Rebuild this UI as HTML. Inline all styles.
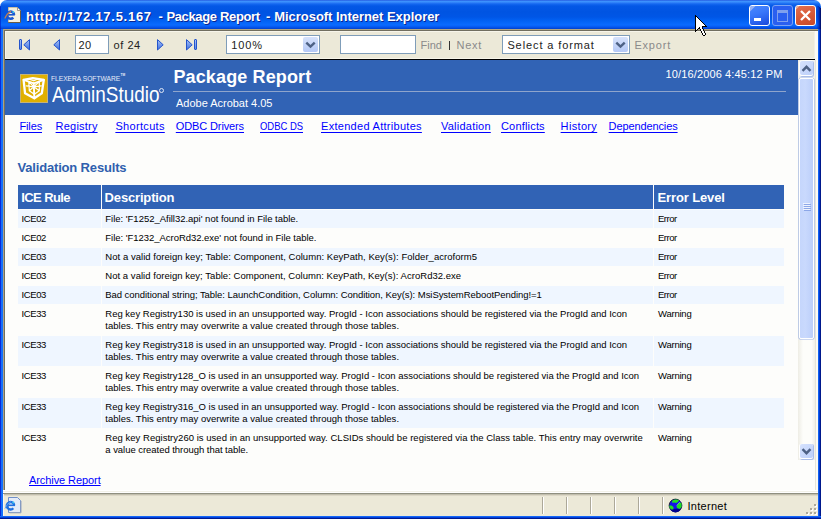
<!DOCTYPE html>
<html><head><meta charset="utf-8"><style>
html,body{margin:0;padding:0;}
body{width:821px;height:519px;position:relative;overflow:hidden;background:#fff;font-family:"Liberation Sans", sans-serif;}
.t{position:absolute;white-space:nowrap;line-height:1;}
.b{position:absolute;}
.lnk{text-decoration:underline;text-underline-offset:2px;text-decoration-thickness:1px;text-decoration-skip-ink:none;}
#title{position:absolute;left:0;top:0;width:821px;height:29px;border-radius:7px 7px 0 0;
 background:linear-gradient(to bottom,#1d46d6 0px,#3f97ff 1px,#3a8cfb 2px,#1467f0 4px,#0458e6 6px,#0054e2 12px,#0056e6 17px,#0262f4 21px,#0a6bff 25px,#0558f0 27px,#0040cc 29px);}
#lframe{position:absolute;left:0;top:29px;width:3px;height:490px;background:linear-gradient(to right,#0a2ad8 0,#0a2ad8 1px,#1470fa 1px,#1470fa 3px);}
#rframe{position:absolute;left:818px;top:29px;width:3px;height:490px;background:linear-gradient(to right,#1060f0 0,#1060f0 1px,#0038d0 1px,#0038d0 2px,#00188c 2px);}
#bframe{position:absolute;left:0;top:516px;width:821px;height:3px;background:linear-gradient(to bottom,#1466f8 0,#1466f8 1px,#0040d8 1px,#0040d8 2px,#001a90 2px);}
.tbtn{position:absolute;top:5px;width:19px;height:19px;border:1px solid #fff;border-radius:3px;overflow:hidden;background:linear-gradient(160deg,#4a88ff 0%,#3a78fa 40%,#2a62ee 70%,#1a48d8 100%);}
.tbtn.dis{border-color:#7ba2f5;background:#2a5ff0;}
.tbtn.close{background:linear-gradient(160deg,#e27050 0%,#d85a38 50%,#c84a28 100%);}
#toolbar{position:absolute;left:3px;top:29px;width:815px;height:31px;background:#ece9d8;box-sizing:border-box;border-top:1px solid #b0a684;border-left:1px solid #a9a286;}
#toolbar:after{content:"";position:absolute;left:0;top:0;right:0;height:1px;background:#716e60;}
#content{position:absolute;left:3px;top:59px;width:815px;height:433px;background:#fff;box-sizing:border-box;border-top:1px solid #000;border-left:1px solid #a09878;}
#hdr{position:absolute;left:5px;top:60px;width:793px;height:55px;background:#3163b5;}
#status{position:absolute;left:3px;top:492px;width:815px;height:24px;background:#ece9d8;box-sizing:border-box;border-top:1px solid #c5c1ac;}
</style></head><body>
<div id="title"></div>
<div id="lframe"></div><div id="rframe"></div><div id="bframe"></div>
<div class="b" style="left:0px;top:6px;width:1px;height:23px;background:rgba(0,20,190,0.55);"></div>
<div class="b" style="left:817px;top:6px;width:1px;height:23px;background:rgba(0,40,190,0.35);"></div>
<div class="b" style="left:818px;top:6px;width:1px;height:23px;background:rgba(0,30,170,0.55);"></div>
<div class="b" style="left:819px;top:7px;width:1px;height:22px;background:rgba(0,20,140,0.75);"></div>
<div class="b" style="left:820px;top:8px;width:1px;height:21px;background:rgba(0,10,100,0.9);"></div>
<svg class="b" style="left:4px;top:6px" width="18" height="18" viewBox="0 0 18 18">
<path d="M4.5 1.5 H13.5 L16.5 4.5 V16.5 H4.5 Z" fill="#f4f0e0" stroke="#6a5c44" stroke-width="1"/>
<path d="M4.5 1.5 H13.5 M4.5 1.5 V16" stroke="#c8c0a8" stroke-width="1"/>
<path d="M13.5 1.5 V4.5 H16.5" fill="#fff" stroke="#8a8070" stroke-width="0.8"/>
<path d="M10.2 8.8 A3.6 3.6 0 1 0 9.3 11.6" stroke="#1a56d0" stroke-width="2.4" fill="none"/>
<path d="M3 8.8 H10.8" stroke="#1a56d0" stroke-width="1.6"/>
<path d="M0.8 12.5 Q2.5 8 7 5.3" stroke="#c88048" stroke-width="1.1" fill="none"/>
<circle cx="9.3" cy="6" r="1" fill="#40d0f0"/>
</svg>
<div class="t" style="left:26.00px;top:10.00px;font-size:13px;color:#fff;font-weight:bold;letter-spacing:0.726px;text-shadow:1px 1px 0 #0a2590;">http://172.17.5.167</div>
<div class="t" style="left:158.50px;top:10.00px;font-size:13px;color:#fff;font-weight:bold;letter-spacing:-0.829px;text-shadow:1px 1px 0 #0a2590;">-</div>
<div class="t" style="left:166.40px;top:10.00px;font-size:13px;color:#fff;font-weight:bold;letter-spacing:-0.347px;text-shadow:1px 1px 0 #0a2590;">Package Report</div>
<div class="t" style="left:266.00px;top:10.00px;font-size:13px;color:#fff;font-weight:bold;letter-spacing:-0.629px;text-shadow:1px 1px 0 #0a2590;">-</div>
<div class="t" style="left:274.20px;top:10.00px;font-size:13px;color:#fff;font-weight:bold;letter-spacing:-0.035px;text-shadow:1px 1px 0 #0a2590;">Microsoft Internet Explorer</div>
<div class="tbtn" style="left:749px"><svg class="b" style="left:0;top:0" width="8" height="8"><path d="M0 0 H5.5 L0 5.5 Z" fill="#a4b8f0" opacity="0.85"/></svg><div class="b" style="left:4px;top:12px;width:7px;height:3px;background:#fff"></div></div>
<div class="tbtn dis" style="left:772px"><div class="b" style="left:4px;top:4px;width:9px;height:8px;border:1px solid #7fa0ee;border-top-width:3px"></div></div>
<div class="tbtn close" style="left:795px"><svg class="b" style="left:0;top:0" width="8" height="8"><path d="M0 0 H3.5 L0 3.5 Z" fill="#e8b8a8" opacity="0.9"/></svg><svg class="b" style="left:0;top:0" width="19" height="19"><path d="M5 5 L14 14 M14 5 L5 14" stroke="#fff" stroke-width="2.3"/></svg></div>
<div class="b" style="left:3px;top:29px;width:815px;height:31px;background:#ece9d8;"></div>
<div class="b" style="left:3px;top:29px;width:815px;height:1px;background:#b0a684;"></div>
<div class="b" style="left:3px;top:29px;width:1px;height:461px;background:#a9a286;"></div>
<div class="b" style="left:4px;top:30px;width:814px;height:1px;background:#716e60;"></div>
<div class="b" style="left:4px;top:30px;width:1px;height:460px;background:#716e60;"></div>
<div class="b" style="left:5px;top:31px;width:810px;height:1px;background:#f7f5ea;"></div>
<div class="b" style="left:5px;top:31px;width:1px;height:27px;background:#f7f5ea;"></div>
<div class="b" style="left:5px;top:58px;width:810px;height:1px;background:#f7f5ea;"></div>
<div class="b" style="left:5px;top:59px;width:810px;height:1px;background:#000;"></div>
<div class="b" style="left:815px;top:31px;width:3px;height:460px;background:#fbfaf4;"></div>
<div class="b" style="left:814px;top:31px;width:1px;height:28px;background:#f2f0e4;"></div>
<div class="b" style="left:19px;top:39px;width:1px;height:9px;background:linear-gradient(#a8c2f6,#5a88e8);border:1px solid #2454cc;border-radius:1px;"></div>
<svg class="b" style="left:23px;top:39px" width="8" height="12" viewBox="0 0 8 12"><defs><linearGradient id="gl23" x1="0" y1="0" x2="0" y2="1"><stop offset="0" stop-color="#a8c2f6"/><stop offset="1" stop-color="#3f70e0"/></linearGradient></defs><path d="M6.5 0.6 V11 L0.8 5.8 Z" fill="url(#gl23)" stroke="#2454cc" stroke-width="1" stroke-linejoin="round"/></svg>
<svg class="b" style="left:53px;top:39px" width="8" height="12" viewBox="0 0 8 12"><defs><linearGradient id="gl53" x1="0" y1="0" x2="0" y2="1"><stop offset="0" stop-color="#a8c2f6"/><stop offset="1" stop-color="#3f70e0"/></linearGradient></defs><path d="M6.5 0.6 V11 L0.8 5.8 Z" fill="url(#gl53)" stroke="#2454cc" stroke-width="1" stroke-linejoin="round"/></svg>
<svg class="b" style="left:157px;top:39px" width="8" height="12" viewBox="0 0 8 12"><defs><linearGradient id="gr157" x1="0" y1="0" x2="0" y2="1"><stop offset="0" stop-color="#a8c2f6"/><stop offset="1" stop-color="#3f70e0"/></linearGradient></defs><path d="M0.5 0.6 V11 L6.2 5.8 Z" fill="url(#gr157)" stroke="#2454cc" stroke-width="1" stroke-linejoin="round"/></svg>
<svg class="b" style="left:186px;top:39px" width="8" height="12" viewBox="0 0 8 12"><defs><linearGradient id="gr186" x1="0" y1="0" x2="0" y2="1"><stop offset="0" stop-color="#a8c2f6"/><stop offset="1" stop-color="#3f70e0"/></linearGradient></defs><path d="M0.5 0.6 V11 L6.2 5.8 Z" fill="url(#gr186)" stroke="#2454cc" stroke-width="1" stroke-linejoin="round"/></svg>
<div class="b" style="left:194px;top:39px;width:1px;height:9px;background:linear-gradient(#a8c2f6,#5a88e8);border:1px solid #2454cc;border-radius:1px;"></div>
<div class="b" style="left:75px;top:35px;width:32px;height:17px;background:#fff;border:1px solid #7f9db9;"></div>
<div class="t" style="left:78.50px;top:39.69px;font-size:11px;color:#222;letter-spacing:0.282px;">20</div>
<div class="t" style="left:113.50px;top:39.69px;font-size:11px;color:#222;letter-spacing:0.567px;">of 24</div>
<div class="b" style="left:226px;top:35px;width:92px;height:17px;background:#fff;border:1px solid #7f9db9;"></div>
<div class="t" style="left:231.30px;top:39.69px;font-size:11px;color:#222;letter-spacing:0.892px;">100%</div>
<div class="b" style="left:303px;top:37px;width:15px;height:15px;background:linear-gradient(to bottom,#d6e2fb,#b4c8f6);border:0;border-radius:2px;"></div><svg class="b" style="left:303px;top:37px" width="15" height="15"><path d="M3.3 5.6 L7.5 9.6 L11.7 5.6" stroke="#4d6185" stroke-width="2.4" fill="none"/></svg>
<div class="b" style="left:340px;top:35px;width:74px;height:17px;background:#fff;border:1px solid #7f9db9;"></div>
<div class="t" style="left:420.40px;top:39.69px;font-size:11px;color:#8a8a8a;letter-spacing:0.050px;">Find</div>
<div class="b" style="left:449px;top:41px;width:1px;height:9px;background:#333;"></div>
<div class="t" style="left:456.60px;top:39.69px;font-size:11px;color:#8a8a8a;letter-spacing:0.696px;">Next</div>
<div class="b" style="left:502px;top:35px;width:126px;height:17px;background:#fff;border:1px solid #7f9db9;"></div>
<div class="t" style="left:507.40px;top:39.69px;font-size:11px;color:#222;letter-spacing:0.895px;">Select a format</div>
<div class="b" style="left:613px;top:37px;width:15px;height:15px;background:linear-gradient(to bottom,#d6e2fb,#b4c8f6);border:0;border-radius:2px;"></div><svg class="b" style="left:613px;top:37px" width="15" height="15"><path d="M3.3 5.6 L7.5 9.6 L11.7 5.6" stroke="#4d6185" stroke-width="2.4" fill="none"/></svg>
<div class="t" style="left:634.40px;top:39.69px;font-size:11px;color:#8a8a8a;letter-spacing:0.801px;">Export</div>
<div class="b" style="left:5px;top:60px;width:810px;height:430px;background:#fdfdfb;"></div>
<div class="b" style="left:815px;top:60px;width:1px;height:431px;background:#e6e4d8;"></div>
<div id="hdr"></div>
<svg class="b" style="left:20px;top:74px" width="28" height="29" viewBox="0 0 28 29">
<rect x="0" y="0" width="28" height="29" fill="#c4b27c"/>
<rect x="1" y="1" width="26" height="27" fill="#e0b000"/>
<g transform="translate(0.3,0.8)" stroke="#fff" fill="none" stroke-linejoin="round" stroke-linecap="round">
<path d="M3.3 5 L12.5 3.3 L23.5 5 L21.5 18.5 L14 23.5 L4.75 18.5 Z" stroke-width="2.3"/>
<path d="M3.3 5 L13.5 8.5 L23.5 5 M13.5 8.5 L14 23.5" stroke-width="1.9"/>
<path d="M8.5 6.8 L13.5 12 L19 6.8 M8.5 6.8 L9 16 L14 19.5 L19 16 L19 6.8 M13.5 12 L9 16 M13.5 12 L19 16 M6 11 L13.5 12 L21 11 M9 4.5 L13.5 6 M17 4.5 L13.5 6" stroke-width="1.2"/>
</g></svg>
<div class="t" style="left:50.90px;top:74.57px;font-size:7.6px;color:#e6ecf8;transform:scaleX(0.8746);transform-origin:0 0;">FLEXERA SOFTWARE</div>
<div class="t" style="left:120.50px;top:74.29px;font-size:3.2px;color:#e6ecf8;font-weight:bold;">TM</div>
<div class="t" style="left:51.70px;top:84.38px;font-size:22px;color:#fff;transform:scaleX(0.8618);transform-origin:0 0;">AdminStudio</div>
<div class="b" style="left:159px;top:88px;width:3px;height:3px;border:0.5px solid #dfe6f5;border-radius:50%"></div>
<div class="t" style="left:173.40px;top:67.76px;font-size:18px;color:#fff;font-weight:bold;letter-spacing:0.139px;">Package Report</div>
<div class="b" style="left:173px;top:91px;width:613px;height:1px;background:#8fa5cc;"></div>
<div class="t" style="left:176.00px;top:97.69px;font-size:11px;color:#fff;letter-spacing:-0.013px;">Adobe Acrobat 4.05</div>
<div class="t" style="left:665.60px;top:68.69px;font-size:11px;color:#fff;letter-spacing:0.125px;">10/16/2006 4:45:12 PM</div>
<div class="t lnk" style="left:19.50px;top:120.69px;font-size:11px;color:#0000ff;letter-spacing:-0.145px;">Files</div>
<div class="t lnk" style="left:55.60px;top:120.69px;font-size:11px;color:#0000ff;letter-spacing:0.207px;">Registry</div>
<div class="t lnk" style="left:115.40px;top:120.69px;font-size:11px;color:#0000ff;letter-spacing:0.326px;">Shortcuts</div>
<div class="t lnk" style="left:175.80px;top:120.69px;font-size:11px;color:#0000ff;letter-spacing:-0.122px;">ODBC Drivers</div>
<div class="t lnk" style="left:259.80px;top:120.69px;font-size:11px;color:#0000ff;transform:scaleX(0.8580);transform-origin:0 0;">ODBC DS</div>
<div class="t lnk" style="left:321.00px;top:120.69px;font-size:11px;color:#0000ff;letter-spacing:0.289px;">Extended Attributes</div>
<div class="t lnk" style="left:441.00px;top:120.69px;font-size:11px;color:#0000ff;letter-spacing:0.230px;">Validation</div>
<div class="t lnk" style="left:501.00px;top:120.69px;font-size:11px;color:#0000ff;letter-spacing:0.180px;">Conflicts</div>
<div class="t lnk" style="left:560.60px;top:120.69px;font-size:11px;color:#0000ff;letter-spacing:0.339px;">History</div>
<div class="t lnk" style="left:608.60px;top:120.69px;font-size:11px;color:#0000ff;letter-spacing:-0.111px;">Dependencies</div>
<div class="t" style="left:17.40px;top:161.00px;font-size:13px;color:#2f5fae;font-weight:bold;letter-spacing:-0.165px;">Validation Results</div>
<div class="b" style="left:18px;top:185px;width:83px;height:24px;background:#3163b5;"></div>
<div class="b" style="left:102px;top:185px;width:551px;height:24px;background:#3163b5;"></div>
<div class="b" style="left:654px;top:185px;width:130px;height:24px;background:#3163b5;"></div>
<div class="t" style="left:21.30px;top:191.00px;font-size:13px;color:#fff;font-weight:bold;letter-spacing:-0.594px;">ICE Rule</div>
<div class="t" style="left:104.60px;top:191.00px;font-size:13px;color:#fff;font-weight:bold;letter-spacing:-0.165px;">Description</div>
<div class="t" style="left:657.50px;top:191.00px;font-size:13px;color:#fff;font-weight:bold;letter-spacing:-0.122px;">Error Level</div>
<div class="b" style="left:18px;top:210px;width:83px;height:18px;background:#eff6ff;"></div>
<div class="b" style="left:102px;top:210px;width:551px;height:18px;background:#eff6ff;"></div>
<div class="b" style="left:654px;top:210px;width:130px;height:18px;background:#eff6ff;"></div>
<div class="t" style="left:21.50px;top:213.96px;font-size:9.5px;color:#000;letter-spacing:-0.381px;">ICE02</div>
<div class="t" style="left:105.30px;top:213.96px;font-size:9.5px;color:#000;letter-spacing:-0.017px;">File: &#x27;F1252_Afill32.api&#x27; not found in File table.</div>
<div class="t" style="left:658.00px;top:213.96px;font-size:9.5px;color:#000;letter-spacing:-0.502px;">Error</div>
<div class="t" style="left:21.50px;top:232.96px;font-size:9.5px;color:#000;letter-spacing:-0.381px;">ICE02</div>
<div class="t" style="left:105.30px;top:232.96px;font-size:9.5px;color:#000;letter-spacing:-0.032px;">File: &#x27;F1232_AcroRd32.exe&#x27; not found in File table.</div>
<div class="t" style="left:658.00px;top:232.96px;font-size:9.5px;color:#000;letter-spacing:-0.502px;">Error</div>
<div class="b" style="left:18px;top:248px;width:83px;height:18px;background:#eff6ff;"></div>
<div class="b" style="left:102px;top:248px;width:551px;height:18px;background:#eff6ff;"></div>
<div class="b" style="left:654px;top:248px;width:130px;height:18px;background:#eff6ff;"></div>
<div class="t" style="left:21.50px;top:251.96px;font-size:9.5px;color:#000;letter-spacing:-0.381px;">ICE03</div>
<div class="t" style="left:105.30px;top:251.96px;font-size:9.5px;color:#000;letter-spacing:0.040px;">Not a valid foreign key; Table: Component, Column: KeyPath, Key(s): Folder_acroform5</div>
<div class="t" style="left:658.00px;top:251.96px;font-size:9.5px;color:#000;letter-spacing:-0.502px;">Error</div>
<div class="t" style="left:21.50px;top:270.96px;font-size:9.5px;color:#000;letter-spacing:-0.381px;">ICE03</div>
<div class="t" style="left:105.30px;top:270.96px;font-size:9.5px;color:#000;letter-spacing:0.035px;">Not a valid foreign key; Table: Component, Column: KeyPath, Key(s): AcroRd32.exe</div>
<div class="t" style="left:658.00px;top:270.96px;font-size:9.5px;color:#000;letter-spacing:-0.502px;">Error</div>
<div class="b" style="left:18px;top:286px;width:83px;height:18px;background:#eff6ff;"></div>
<div class="b" style="left:102px;top:286px;width:551px;height:18px;background:#eff6ff;"></div>
<div class="b" style="left:654px;top:286px;width:130px;height:18px;background:#eff6ff;"></div>
<div class="t" style="left:21.50px;top:289.96px;font-size:9.5px;color:#000;letter-spacing:-0.381px;">ICE03</div>
<div class="t" style="left:105.30px;top:289.96px;font-size:9.5px;color:#000;letter-spacing:-0.056px;">Bad conditional string; Table: LaunchCondition, Column: Condition, Key(s): MsiSystemRebootPending!=1</div>
<div class="t" style="left:658.00px;top:289.96px;font-size:9.5px;color:#000;letter-spacing:-0.502px;">Error</div>
<div class="t" style="left:21.50px;top:308.96px;font-size:9.5px;color:#000;letter-spacing:-0.381px;">ICE33</div>
<div class="t" style="left:105.30px;top:308.96px;font-size:9.5px;color:#000;letter-spacing:-0.002px;">Reg key Registry130 is used in an unsupported way. ProgId - Icon associations should be registered via the ProgId and Icon</div>
<div class="t" style="left:105.30px;top:320.96px;font-size:9.5px;color:#000;letter-spacing:0.012px;">tables. This entry may overwrite a value created through those tables.</div>
<div class="t" style="left:658.00px;top:308.96px;font-size:9.5px;color:#000;letter-spacing:-0.217px;">Warning</div>
<div class="b" style="left:18px;top:336px;width:83px;height:30px;background:#eff6ff;"></div>
<div class="b" style="left:102px;top:336px;width:551px;height:30px;background:#eff6ff;"></div>
<div class="b" style="left:654px;top:336px;width:130px;height:30px;background:#eff6ff;"></div>
<div class="t" style="left:21.50px;top:339.96px;font-size:9.5px;color:#000;letter-spacing:-0.381px;">ICE33</div>
<div class="t" style="left:105.30px;top:339.96px;font-size:9.5px;color:#000;letter-spacing:-0.002px;">Reg key Registry318 is used in an unsupported way. ProgId - Icon associations should be registered via the ProgId and Icon</div>
<div class="t" style="left:105.30px;top:351.96px;font-size:9.5px;color:#000;letter-spacing:0.012px;">tables. This entry may overwrite a value created through those tables.</div>
<div class="t" style="left:658.00px;top:339.96px;font-size:9.5px;color:#000;letter-spacing:-0.217px;">Warning</div>
<div class="t" style="left:21.50px;top:370.96px;font-size:9.5px;color:#000;letter-spacing:-0.381px;">ICE33</div>
<div class="t" style="left:105.30px;top:370.96px;font-size:9.5px;color:#000;letter-spacing:-0.008px;">Reg key Registry128_O is used in an unsupported way. ProgId - Icon associations should be registered via the ProgId and Icon</div>
<div class="t" style="left:105.30px;top:382.96px;font-size:9.5px;color:#000;letter-spacing:0.012px;">tables. This entry may overwrite a value created through those tables.</div>
<div class="t" style="left:658.00px;top:370.96px;font-size:9.5px;color:#000;letter-spacing:-0.217px;">Warning</div>
<div class="b" style="left:18px;top:398px;width:83px;height:30px;background:#eff6ff;"></div>
<div class="b" style="left:102px;top:398px;width:551px;height:30px;background:#eff6ff;"></div>
<div class="b" style="left:654px;top:398px;width:130px;height:30px;background:#eff6ff;"></div>
<div class="t" style="left:21.50px;top:401.96px;font-size:9.5px;color:#000;letter-spacing:-0.381px;">ICE33</div>
<div class="t" style="left:105.30px;top:401.96px;font-size:9.5px;color:#000;letter-spacing:-0.008px;">Reg key Registry316_O is used in an unsupported way. ProgId - Icon associations should be registered via the ProgId and Icon</div>
<div class="t" style="left:105.30px;top:413.96px;font-size:9.5px;color:#000;letter-spacing:0.012px;">tables. This entry may overwrite a value created through those tables.</div>
<div class="t" style="left:658.00px;top:401.96px;font-size:9.5px;color:#000;letter-spacing:-0.217px;">Warning</div>
<div class="t" style="left:21.50px;top:432.96px;font-size:9.5px;color:#000;letter-spacing:-0.381px;">ICE33</div>
<div class="t" style="left:105.30px;top:432.96px;font-size:9.5px;color:#000;letter-spacing:0.028px;">Reg key Registry260 is used in an unsupported way. CLSIDs should be registered via the Class table. This entry may overwrite</div>
<div class="t" style="left:105.30px;top:444.96px;font-size:9.5px;color:#000;letter-spacing:-0.040px;">a value created through that table.</div>
<div class="t" style="left:658.00px;top:432.96px;font-size:9.5px;color:#000;letter-spacing:-0.217px;">Warning</div>
<div class="t lnk" style="left:29.00px;top:474.69px;font-size:11px;color:#0000ff;letter-spacing:-0.082px;text-underline-offset:1px;">Archive Report</div>
<div class="b" style="left:798px;top:60px;width:17px;height:400px;background:linear-gradient(to right,#eeede5,#fdfdfa 30%,#fdfdfa 80%,#f0efe8);"></div>
<div class="b" style="left:800px;top:61px;width:14px;height:16px;background:#aabde8;border-radius:2px;"></div><div class="b" style="left:799px;top:61px;width:14px;height:15px;background:#fff;border-radius:2px;"></div><div class="b" style="left:800px;top:61px;width:13px;height:14px;background:linear-gradient(135deg,#d6e2fd,#bccffa);border-radius:2px;"></div><svg class="b" style="left:799px;top:61px" width="15" height="16"><path d="M3.5 9.8 L7.5 5.8 L11.5 9.8" stroke="#4d6185" stroke-width="2.4" fill="none"/></svg>
<div class="b" style="left:799px;top:78px;width:13px;height:259px;background:linear-gradient(to right,#c5d6fc,#c9d9fd 40%,#bccffa);border:1px solid #fff;border-radius:2px;box-shadow:0 0 0 0.6px #9db4e4;"></div>
<div class="b" style="left:803px;top:203px;width:7px;height:1px;background:#eef3fe;"></div>
<div class="b" style="left:804px;top:204px;width:7px;height:1px;background:#8ca7e8;"></div>
<div class="b" style="left:803px;top:205px;width:7px;height:1px;background:#eef3fe;"></div>
<div class="b" style="left:804px;top:206px;width:7px;height:1px;background:#8ca7e8;"></div>
<div class="b" style="left:803px;top:207px;width:7px;height:1px;background:#eef3fe;"></div>
<div class="b" style="left:804px;top:208px;width:7px;height:1px;background:#8ca7e8;"></div>
<div class="b" style="left:803px;top:209px;width:7px;height:1px;background:#eef3fe;"></div>
<div class="b" style="left:804px;top:210px;width:7px;height:1px;background:#8ca7e8;"></div>
<div class="b" style="left:800px;top:444px;width:14px;height:16px;background:#aabde8;border-radius:2px;"></div><div class="b" style="left:799px;top:444px;width:14px;height:15px;background:#fff;border-radius:2px;"></div><div class="b" style="left:800px;top:444px;width:13px;height:14px;background:linear-gradient(135deg,#d6e2fd,#bccffa);border-radius:2px;"></div><svg class="b" style="left:799px;top:444px" width="15" height="16"><path d="M3.5 5.2 L7.5 9.2 L11.5 5.2" stroke="#4d6185" stroke-width="2.4" fill="none"/></svg>
<div class="b" style="left:3px;top:490px;width:815px;height:1px;background:#ffffff;"></div>
<div class="b" style="left:3px;top:491px;width:815px;height:1px;background:#f2f1e8;"></div>
<div class="b" style="left:3px;top:492px;width:815px;height:1px;background:#fefefe;"></div>
<div class="b" style="left:3px;top:493px;width:815px;height:1px;background:#8f8f80;"></div>
<div class="b" style="left:3px;top:494px;width:815px;height:22px;background:#ece9d8;"></div>
<div class="b" style="left:3px;top:494px;width:815px;height:1px;background:#c2bfae;"></div>
<div class="b" style="left:3px;top:495px;width:815px;height:1px;background:#dcd7c6;"></div>
<div class="b" style="left:3px;top:494px;width:1px;height:22px;background:#f8f6ea;"></div>
<div class="b" style="left:542px;top:497px;width:1px;height:17px;background:#aca899;"></div>
<div class="b" style="left:543px;top:497px;width:1px;height:17px;background:#fff;"></div>
<div class="b" style="left:566px;top:497px;width:1px;height:17px;background:#aca899;"></div>
<div class="b" style="left:567px;top:497px;width:1px;height:17px;background:#fff;"></div>
<div class="b" style="left:590px;top:497px;width:1px;height:17px;background:#aca899;"></div>
<div class="b" style="left:591px;top:497px;width:1px;height:17px;background:#fff;"></div>
<div class="b" style="left:614px;top:497px;width:1px;height:17px;background:#aca899;"></div>
<div class="b" style="left:615px;top:497px;width:1px;height:17px;background:#fff;"></div>
<div class="b" style="left:638px;top:497px;width:1px;height:17px;background:#aca899;"></div>
<div class="b" style="left:639px;top:497px;width:1px;height:17px;background:#fff;"></div>
<div class="b" style="left:662px;top:497px;width:1px;height:17px;background:#aca899;"></div>
<div class="b" style="left:663px;top:497px;width:1px;height:17px;background:#fff;"></div>
<svg class="b" style="left:4px;top:496px" width="18" height="18" viewBox="0 0 18 18">
<path d="M4.5 1.5 H13.5 L16.5 4.5 V16.5 H4.5 Z" fill="#e4ebf8" stroke="#7090c8" stroke-width="1"/>
<path d="M5.5 16.8 H17 V5" stroke="#98a4bc" stroke-width="1" fill="none"/>
<path d="M10.2 9.3 A3.7 3.7 0 1 0 9.3 12.2" stroke="#2070e0" stroke-width="2.4" fill="none"/>
<path d="M3 9.3 H11" stroke="#2070e0" stroke-width="1.6"/>
<path d="M1 12.5 Q2.5 8 7 5.5" stroke="#5aa0f0" stroke-width="1" fill="none"/>
<circle cx="9.3" cy="6.4" r="1" fill="#40d0f0"/>
</svg>
<svg class="b" style="left:668px;top:498px" width="15" height="15" viewBox="0 0 15 15">
<circle cx="7.5" cy="7.5" r="6.4" fill="#1414e8" stroke="#000" stroke-width="0.7"/>
<path d="M2.5 12 A6.4 6.4 0 0 0 12.5 12 L11 10.5 L5 11 Z" fill="#000090"/>
<path d="M4 3 C6 1.3 9 1.2 11 2 L10 4 L8 5 L6 4.5 L4.5 5 Z" fill="#22e022"/>
<path d="M1.3 7.5 L3.5 7.5 L5.5 9 L5.3 11.5 L3 11.2 L1.5 9.5 Z" fill="#22e022"/>
<path d="M8.5 8 L11 4.5 L13.5 5 L13.6 9 L11.5 11 L9 10 Z" fill="#22e022"/>
<path d="M8.8 7.5 L12.5 3.5" stroke="#a8a8ff" stroke-width="0.6"/>
</svg>
<div class="t" style="left:687.50px;top:500.69px;font-size:11px;color:#000;letter-spacing:0.275px;">Internet</div>
<div class="b" style="left:815px;top:505px;width:2px;height:2px;background:#fff;"></div>
<div class="b" style="left:814px;top:504px;width:2px;height:2px;background:#aca899;"></div>
<div class="b" style="left:811px;top:509px;width:2px;height:2px;background:#fff;"></div>
<div class="b" style="left:810px;top:508px;width:2px;height:2px;background:#aca899;"></div>
<div class="b" style="left:815px;top:509px;width:2px;height:2px;background:#fff;"></div>
<div class="b" style="left:814px;top:508px;width:2px;height:2px;background:#aca899;"></div>
<div class="b" style="left:807px;top:513px;width:2px;height:2px;background:#fff;"></div>
<div class="b" style="left:806px;top:512px;width:2px;height:2px;background:#aca899;"></div>
<div class="b" style="left:811px;top:513px;width:2px;height:2px;background:#fff;"></div>
<div class="b" style="left:810px;top:512px;width:2px;height:2px;background:#aca899;"></div>
<div class="b" style="left:815px;top:513px;width:2px;height:2px;background:#fff;"></div>
<div class="b" style="left:814px;top:512px;width:2px;height:2px;background:#aca899;"></div>
<svg class="b" style="left:695px;top:15px" width="12" height="21" shape-rendering="crispEdges"><rect x="0" y="0" width="1" height="1" fill="#000"/><rect x="0" y="1" width="1" height="1" fill="#000"/><rect x="1" y="1" width="1" height="1" fill="#000"/><rect x="0" y="2" width="1" height="1" fill="#000"/><rect x="1" y="2" width="1" height="1" fill="#fff"/><rect x="2" y="2" width="1" height="1" fill="#000"/><rect x="0" y="3" width="1" height="1" fill="#000"/><rect x="1" y="3" width="1" height="1" fill="#fff"/><rect x="2" y="3" width="1" height="1" fill="#fff"/><rect x="3" y="3" width="1" height="1" fill="#000"/><rect x="0" y="4" width="1" height="1" fill="#000"/><rect x="1" y="4" width="1" height="1" fill="#fff"/><rect x="2" y="4" width="1" height="1" fill="#fff"/><rect x="3" y="4" width="1" height="1" fill="#fff"/><rect x="4" y="4" width="1" height="1" fill="#000"/><rect x="0" y="5" width="1" height="1" fill="#000"/><rect x="1" y="5" width="1" height="1" fill="#fff"/><rect x="2" y="5" width="1" height="1" fill="#fff"/><rect x="3" y="5" width="1" height="1" fill="#fff"/><rect x="4" y="5" width="1" height="1" fill="#fff"/><rect x="5" y="5" width="1" height="1" fill="#000"/><rect x="0" y="6" width="1" height="1" fill="#000"/><rect x="1" y="6" width="1" height="1" fill="#fff"/><rect x="2" y="6" width="1" height="1" fill="#fff"/><rect x="3" y="6" width="1" height="1" fill="#fff"/><rect x="4" y="6" width="1" height="1" fill="#fff"/><rect x="5" y="6" width="1" height="1" fill="#fff"/><rect x="6" y="6" width="1" height="1" fill="#000"/><rect x="0" y="7" width="1" height="1" fill="#000"/><rect x="1" y="7" width="1" height="1" fill="#fff"/><rect x="2" y="7" width="1" height="1" fill="#fff"/><rect x="3" y="7" width="1" height="1" fill="#fff"/><rect x="4" y="7" width="1" height="1" fill="#fff"/><rect x="5" y="7" width="1" height="1" fill="#fff"/><rect x="6" y="7" width="1" height="1" fill="#fff"/><rect x="7" y="7" width="1" height="1" fill="#000"/><rect x="0" y="8" width="1" height="1" fill="#000"/><rect x="1" y="8" width="1" height="1" fill="#fff"/><rect x="2" y="8" width="1" height="1" fill="#fff"/><rect x="3" y="8" width="1" height="1" fill="#fff"/><rect x="4" y="8" width="1" height="1" fill="#fff"/><rect x="5" y="8" width="1" height="1" fill="#fff"/><rect x="6" y="8" width="1" height="1" fill="#fff"/><rect x="7" y="8" width="1" height="1" fill="#fff"/><rect x="8" y="8" width="1" height="1" fill="#000"/><rect x="0" y="9" width="1" height="1" fill="#000"/><rect x="1" y="9" width="1" height="1" fill="#fff"/><rect x="2" y="9" width="1" height="1" fill="#fff"/><rect x="3" y="9" width="1" height="1" fill="#fff"/><rect x="4" y="9" width="1" height="1" fill="#fff"/><rect x="5" y="9" width="1" height="1" fill="#fff"/><rect x="6" y="9" width="1" height="1" fill="#fff"/><rect x="7" y="9" width="1" height="1" fill="#fff"/><rect x="8" y="9" width="1" height="1" fill="#fff"/><rect x="9" y="9" width="1" height="1" fill="#000"/><rect x="0" y="10" width="1" height="1" fill="#000"/><rect x="1" y="10" width="1" height="1" fill="#fff"/><rect x="2" y="10" width="1" height="1" fill="#fff"/><rect x="3" y="10" width="1" height="1" fill="#fff"/><rect x="4" y="10" width="1" height="1" fill="#fff"/><rect x="5" y="10" width="1" height="1" fill="#fff"/><rect x="6" y="10" width="1" height="1" fill="#fff"/><rect x="7" y="10" width="1" height="1" fill="#fff"/><rect x="8" y="10" width="1" height="1" fill="#fff"/><rect x="9" y="10" width="1" height="1" fill="#fff"/><rect x="10" y="10" width="1" height="1" fill="#000"/><rect x="0" y="11" width="1" height="1" fill="#000"/><rect x="1" y="11" width="1" height="1" fill="#fff"/><rect x="2" y="11" width="1" height="1" fill="#fff"/><rect x="3" y="11" width="1" height="1" fill="#fff"/><rect x="4" y="11" width="1" height="1" fill="#fff"/><rect x="5" y="11" width="1" height="1" fill="#fff"/><rect x="6" y="11" width="1" height="1" fill="#fff"/><rect x="7" y="11" width="1" height="1" fill="#000"/><rect x="8" y="11" width="1" height="1" fill="#000"/><rect x="9" y="11" width="1" height="1" fill="#000"/><rect x="10" y="11" width="1" height="1" fill="#000"/><rect x="11" y="11" width="1" height="1" fill="#000"/><rect x="0" y="12" width="1" height="1" fill="#000"/><rect x="1" y="12" width="1" height="1" fill="#fff"/><rect x="2" y="12" width="1" height="1" fill="#fff"/><rect x="3" y="12" width="1" height="1" fill="#fff"/><rect x="4" y="12" width="1" height="1" fill="#000"/><rect x="5" y="12" width="1" height="1" fill="#fff"/><rect x="6" y="12" width="1" height="1" fill="#fff"/><rect x="7" y="12" width="1" height="1" fill="#000"/><rect x="0" y="13" width="1" height="1" fill="#000"/><rect x="1" y="13" width="1" height="1" fill="#fff"/><rect x="2" y="13" width="1" height="1" fill="#fff"/><rect x="3" y="13" width="1" height="1" fill="#000"/><rect x="4" y="13" width="1" height="1" fill="#000"/><rect x="5" y="13" width="1" height="1" fill="#fff"/><rect x="6" y="13" width="1" height="1" fill="#fff"/><rect x="7" y="13" width="1" height="1" fill="#000"/><rect x="0" y="14" width="1" height="1" fill="#000"/><rect x="1" y="14" width="1" height="1" fill="#fff"/><rect x="2" y="14" width="1" height="1" fill="#000"/><rect x="5" y="14" width="1" height="1" fill="#000"/><rect x="6" y="14" width="1" height="1" fill="#fff"/><rect x="7" y="14" width="1" height="1" fill="#fff"/><rect x="8" y="14" width="1" height="1" fill="#000"/><rect x="0" y="15" width="1" height="1" fill="#000"/><rect x="1" y="15" width="1" height="1" fill="#000"/><rect x="5" y="15" width="1" height="1" fill="#000"/><rect x="6" y="15" width="1" height="1" fill="#fff"/><rect x="7" y="15" width="1" height="1" fill="#fff"/><rect x="8" y="15" width="1" height="1" fill="#000"/><rect x="0" y="16" width="1" height="1" fill="#000"/><rect x="6" y="16" width="1" height="1" fill="#000"/><rect x="7" y="16" width="1" height="1" fill="#fff"/><rect x="8" y="16" width="1" height="1" fill="#fff"/><rect x="9" y="16" width="1" height="1" fill="#000"/><rect x="6" y="17" width="1" height="1" fill="#000"/><rect x="7" y="17" width="1" height="1" fill="#fff"/><rect x="8" y="17" width="1" height="1" fill="#fff"/><rect x="9" y="17" width="1" height="1" fill="#000"/><rect x="7" y="18" width="1" height="1" fill="#000"/><rect x="8" y="18" width="1" height="1" fill="#fff"/><rect x="9" y="18" width="1" height="1" fill="#fff"/><rect x="10" y="18" width="1" height="1" fill="#000"/><rect x="7" y="19" width="1" height="1" fill="#000"/><rect x="8" y="19" width="1" height="1" fill="#fff"/><rect x="9" y="19" width="1" height="1" fill="#fff"/><rect x="10" y="19" width="1" height="1" fill="#000"/><rect x="8" y="20" width="1" height="1" fill="#000"/><rect x="9" y="20" width="1" height="1" fill="#000"/></svg>
</body></html>
